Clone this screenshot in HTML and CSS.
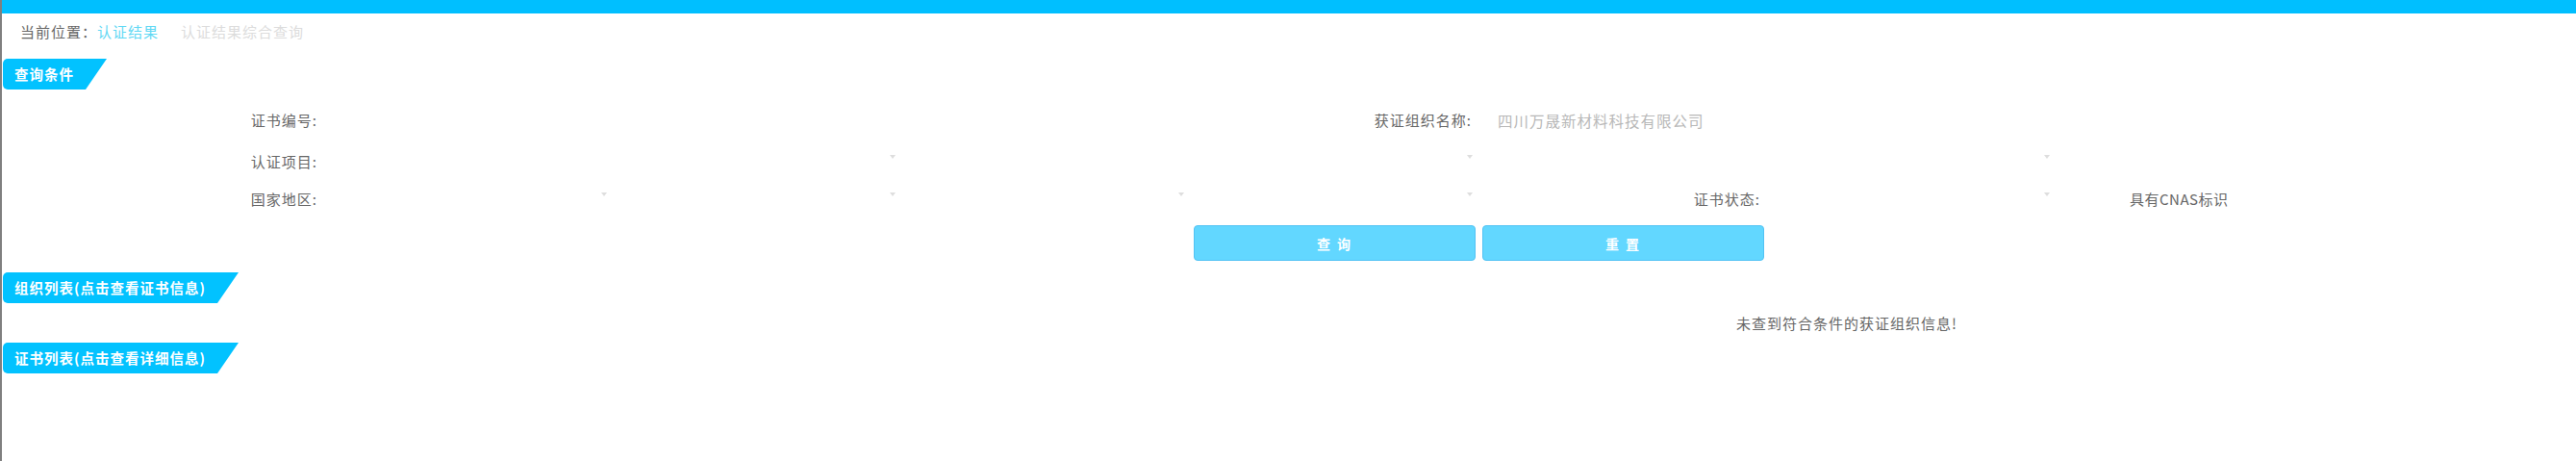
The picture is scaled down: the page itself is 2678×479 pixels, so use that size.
FILE: index.html
```html
<!DOCTYPE html>
<html lang="zh-CN">
<head>
<meta charset="utf-8">
<title>认证结果综合查询</title>
<link rel="stylesheet" href="styles.css">
</head>
<body>
<div class="topbar"></div>
<div class="crumbs"><span class="crumb-label">当前位置：</span><span class="crumb-link">认证结果</span><span class="crumb-current">认证结果综合查询</span></div>

<div class="tab tab-first"><span>查询条件</span></div>

<div class="form">
  <div class="lbl">证书编号:</div>
  <div class="inp c2-5"></div>
  <div class="lbl">获证组织名称:</div>
  <div class="inp val c6-8">四川万晟新材料科技有限公司</div>
  <div></div>

  <div class="lbl">认证项目:</div>
  <div class="sel c2-4"></div>
  <div class="sel c4-6"></div>
  <div class="sel c6-8"></div>
  <div></div>

  <div class="lbl">国家地区:</div>
  <div class="sel"></div>
  <div class="sel"></div>
  <div class="sel"></div>
  <div class="sel"></div>
  <div class="lbl">证书状态:</div>
  <div class="sel"></div>
  <div class="chk">具有CNAS标识</div>

  <div class="btn c5">查 询</div>
  <div class="btn c6">重 置</div>
</div>

<div class="tab tab-next"><span>组织列表(点击查看证书信息)</span></div>
<div class="empty">未查到符合条件的获证组织信息!</div>
<div class="tab"><span>证书列表(点击查看详细信息)</span></div>
</body>
</html>
```

FILE: styles.css
```css
html, body {
  height: 100%;
}
body {
  margin: 0;
  border-left: 2px solid #7f7f7f;
  background: #fff;
  font-family: "Noto Sans CJK SC", "Noto Sans", sans-serif;
  font-size: 15px;
  letter-spacing: 1px;
  color: #666;
  overflow: hidden;
}
.topbar {
  height: 14px;
  background: #00bfff;
}
.crumbs {
  height: 47px;
  box-sizing: border-box;
  padding: 9px 0 0 19px;
  line-height: 20px;
  white-space: nowrap;
}
.crumb-label { color: #666; }
.crumb-link { color: #5fd8f4; }
.crumb-current { color: #dcdcdc; margin-left: 23px; }

.tab {
  width: fit-content;
  margin-left: 1px;
  height: 32px;
  line-height: 32px;
  padding: 0 34px 0 12px;
  background: #02c2ff;
  color: #fff;
  font-size: 14.5px;
  font-weight: bold;
  letter-spacing: 1px;
  border-radius: 5px 0 0 5px;
  clip-path: polygon(0 0, 100% 0, calc(100% - 22px) 100%, 0 100%);
  white-space: nowrap;
}
.tab-next { margin-top: 12px; }

.form {
  display: grid;
  grid-template-columns: 333px repeat(6, 300px) 1fr;
  grid-template-rows: 43px 43px 34px 48px;
  padding-top: 10px;
}
.lbl {
  display: flex;
  align-items: center;
  justify-content: flex-end;
  padding-right: 5px;
  white-space: nowrap;
}
.inp {
  display: flex;
  align-items: center;
}
.val {
  padding-left: 22px;
  color: #b8b8b8;
  font-size: 15.5px;
  white-space: nowrap;
}
.c2-5 { grid-column: 2 / 5; }
.c6-8 { grid-column: 6 / 8; }
.c2-4 { grid-column: 2 / 4; }
.c4-6 { grid-column: 4 / 6; }
.c5 { grid-column: 5; }
.c6 { grid-column: 6; }

.sel {
  display: flex;
  align-items: center;
  justify-content: flex-end;
  padding-right: 4px;
}
.sel::after {
  content: "";
  width: 0;
  height: 0;
  border-left: 3px solid transparent;
  border-right: 3px solid transparent;
  border-top: 4px solid #dedede;
  margin-bottom: 9px;
}
.chk {
  display: flex;
  align-items: center;
  padding-left: 79px;
  white-space: nowrap;
  letter-spacing: 0.5px;
}
.btn {
  grid-row: 4;
  align-self: end;
  height: 37px;
  margin: 0 1px 0 6px;
  box-sizing: border-box;
  border: 1px solid #52c3f4;
  border-radius: 4px;
  background: #62d7ff;
  color: #fff;
  font-size: 14px;
  font-weight: bold;
  letter-spacing: 2px;
  display: flex;
  align-items: center;
  justify-content: center;
}
.empty {
  height: 41px;
  line-height: 41px;
  padding-left: 1803px;
  color: #666;
  white-space: nowrap;
}
```
